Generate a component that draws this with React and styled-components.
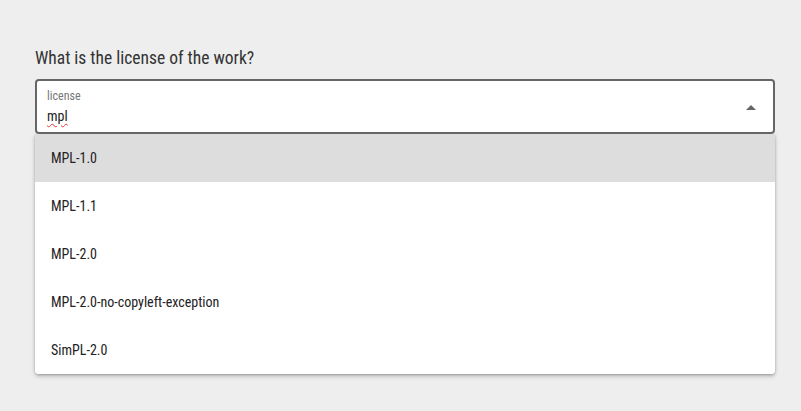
import React from "react";
import styled, { createGlobalStyle } from "styled-components";

const Global = createGlobalStyle`
  html, body { margin: 0; padding: 0; background: #eeeeee; }
  body { font-family: Roboto, "Liberation Sans", sans-serif; font-stretch: 75%; }
`;

const Page = styled.div`
  width: 801px;
  height: 411px;
  box-sizing: border-box;
  padding: 47px 26px 0 35px;
  background: #eeeeee;
`;

const Question = styled.div`
  font-size: 17.5px;
  color: #333;
  line-height: 22px;
  height: 22px;
  margin-bottom: 10px;
  font-stretch: 75%;
`;

const Field = styled.div`
  position: relative;
  width: 740px;
  height: 55px;
  box-sizing: border-box;
  border: 2px solid #666;
  border-radius: 4px;
  background: #fff;
  display: flex;
  align-items: center;
  padding: 0 10px 0 10px;
`;

const Inputs = styled.div`
  flex: 1;
  display: flex;
  flex-direction: column;
  padding-top: 2px;
`;

const Label = styled.div`
  font-size: 12px;
  line-height: 14px;
  color: #777;
  font-stretch: 75%;
`;

const Value = styled.div`
  font-size: 14px;
  line-height: 20px;
  color: #222;
  margin-top: 3px;
  font-stretch: 75%;
`;

const Misspelled = styled.span`
  text-decoration: underline wavy #e53935;
  text-decoration-thickness: 1px;
  text-underline-offset: 2px;
`;

const Arrow = styled.svg`
  width: 10px;
  height: 5px;
  margin-right: 7px;
  margin-top: 1px;
`;

const Menu = styled.div`
  width: 740px;
  background: #fff;
  border-radius: 0 0 4px 4px;
  box-shadow: 0 2px 4px rgba(0,0,0,0.25), 0 1px 2px rgba(0,0,0,0.15);
  overflow: hidden;
`;

const Item = styled.div`
  height: 48px;
  display: flex;
  align-items: center;
  padding-left: 16px;
  font-size: 14px;
  color: #222;
  font-stretch: 75%;
  background: ${p => (p.$active ? "#dddddd" : "#ffffff")};
`;

const options = ["MPL-1.0", "MPL-1.1", "MPL-2.0", "MPL-2.0-no-copyleft-exception", "SimPL-2.0"];

export default function App() {
  return (
    <>
      <Global />
      <Page>
        <Question>What is the license of the work?</Question>
        <Field>
          <Inputs>
            <Label>license</Label>
            <Value><Misspelled>mpl</Misspelled></Value>
          </Inputs>
          <Arrow viewBox="0 0 10 5"><path d="M0 5 L5 0 L10 5 Z" fill="#666" /></Arrow>
        </Field>
        <Menu>
          {options.map((o, i) => (
            <Item key={o} $active={i === 0}>{o}</Item>
          ))}
        </Menu>
      </Page>
    </>
  );
}
